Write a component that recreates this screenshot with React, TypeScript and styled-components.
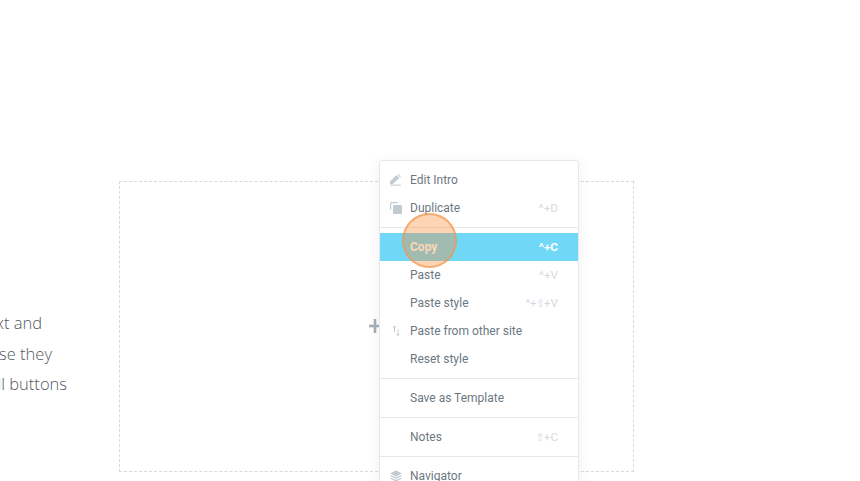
import React from "react";
import styled, { createGlobalStyle } from "styled-components";

const Global = createGlobalStyle`
  html, body { margin: 0; padding: 0; height: 100%; background: #fff; overflow: hidden; }
  #root { height: 100%; }
`;

const Page = styled.div`
  position: relative;
  width: 860px;
  height: 481px;
  overflow: hidden;
  display: flex;
  align-items: flex-start;
  padding-top: 181px;
  box-sizing: border-box;
`;

const Copy = styled.div`
  width: 167px;
  margin-left: -100px;
  margin-right: 52px;
  height: 291px;
  display: flex;
  flex-direction: column;
  justify-content: center;
  font-family: "Open Sans", sans-serif;
  font-weight: 300;
  font-size: 16.5px;
  line-height: 30.5px;
  color: #54595f;
  padding-top: 55px;
  box-sizing: border-box;
`;

const CopyLine = styled.div<{ $inset: number }>`
  text-align: right;
  white-space: nowrap;
  padding-right: ${(p) => p.$inset}px;
`;

const DropZone = styled.div`
  width: 515px;
  height: 291px;
  box-sizing: border-box;
  border: 1px dashed #d5dadf;
  display: flex;
  align-items: center;
  justify-content: center;
  padding: 0 3px 2px 0;
  color: #a4afb7;
`;

const Menu = styled.div`
  position: absolute;
  left: 379px;
  top: 160px;
  width: 200px;
  box-sizing: border-box;
  background: #fff;
  border: 1px solid #e6e9ec;
  border-radius: 3px;
  box-shadow: 0 2px 15px rgba(0, 0, 0, 0.06);
  font-family: Roboto, sans-serif;
  font-size: 12px;
  color: #6d7882;
`;

const Group = styled.div`
  padding: 5px 0;
  & + & { border-top: 1px solid #e6e9ec; }
`;

const Item = styled.div<{ $active?: boolean }>`
  height: 28px;
  display: flex;
  align-items: center;
  padding: 0 20px 0 10px;
  background: ${(p) => (p.$active ? "#71d7f7" : "transparent")};
  color: ${(p) => (p.$active ? "#fff" : "#6d7882")};
  font-weight: ${(p) => (p.$active ? 700 : 400)};
`;

const IconSlot = styled.span`
  width: 12px;
  height: 12px;
  margin-right: 8px;
  color: #c2cbd2;
  display: flex;
  flex: none;
`;

const Label = styled.span`
  flex: 1;
`;

const Shortcut = styled.span<{ $active?: boolean }>`
  font-size: 11.7px;
  color: ${(p) => (p.$active ? "#fff" : "#d5dadf")};
  font-family: Roboto, "DejaVu Sans", sans-serif;
`;

const ShiftKey = styled.span`
  font-size: 11px;
  margin: 0 -1px;
`;

const Spot = styled.div`
  position: absolute;
  left: 402px;
  top: 213px;
  width: 55px;
  height: 55px;
  box-sizing: border-box;
  border-radius: 50%;
  background: rgba(249, 135, 44, 0.35);
  border: 2.5px solid rgba(240, 150, 80, 0.65);
`;

const PlusIcon = () => (
  <svg width="16" height="16" viewBox="0 0 16 16" fill="currentColor">
    <rect x="6.7" y="1" width="2.6" height="14" />
    <rect x="2" y="6.7" width="13" height="2.6" />
  </svg>
);

const Pencil = () => (
  <svg width="12" height="12" viewBox="0 0 12 12" fill="currentColor">
    <path d="M0 7.6 6.4 1.2 9.2 4 2.8 10H0Z" />
    <path d="M7.2.6 8 0 10.8 2.6 10 3.4Z" />
    <rect x="0" y="10.6" width="10.8" height="1" />
  </svg>
);

const Dup = () => (
  <svg width="12" height="12" viewBox="0 0 12 12" fill="currentColor">
    <path d="M0 1a1 1 0 0 1 1-1h6.5v1.2H1.2v6.6H0Z" />
    <rect x="3" y="3" width="9" height="9" rx="1" />
  </svg>
);

const Swap = () => (
  <svg width="12" height="12" viewBox="0 0 12 12" fill="none" stroke="currentColor" strokeWidth="1">
    <path d="M4.5 7V1M3.2 2.4 4.5 1 5.8 2.4" />
    <path d="M8 4.5V10.5M6.7 9.1 8 10.5 9.3 9.1" />
  </svg>
);

const Layers = () => (
  <svg width="12" height="12" viewBox="0 0 12 12" fill="currentColor">
    <path d="M6 0.5 12 3.5 6 6.5 0 3.5Z" />
    <path d="M1.4 5.2 6 7.5 10.6 5.2 12 6 6 9 0 6Z" />
    <path d="M1.4 7.9 6 10.1 10.6 7.9 12 8.6 6 11.6 0 8.6Z" />
  </svg>
);

type Row = { label: string; icon?: React.ReactNode; keys?: React.ReactNode; active?: boolean };

const groups: Row[][] = [
  [
    { label: "Edit Intro", icon: <Pencil /> },
    { label: "Duplicate", icon: <Dup />, keys: "^+D" },
  ],
  [
    { label: "Copy", keys: "^+C", active: true },
    { label: "Paste", keys: "^+V" },
    { label: "Paste style", keys: <>^+<ShiftKey>⇧</ShiftKey>+V</> },
    { label: "Paste from other site", icon: <Swap /> },
    { label: "Reset style" },
  ],
  [{ label: "Save as Template" }],
  [{ label: "Notes", keys: <><ShiftKey>⇧</ShiftKey>+C</> }],
  [{ label: "Navigator", icon: <Layers /> }],
];

export default function App() {
  return (
    <Page>
      <Global />
      <Copy>
        <CopyLine $inset={25}>text and</CopyLine>
        <CopyLine $inset={15}>because they</CopyLine>
        <CopyLine $inset={0}>all buttons</CopyLine>
      </Copy>
      <DropZone>
        <PlusIcon />
      </DropZone>
      <Menu>
        {groups.map((g, i) => (
          <Group key={i}>
            {g.map((r) => (
              <Item key={r.label} $active={r.active}>
                <IconSlot>{r.icon}</IconSlot>
                <Label>{r.label}</Label>
                {r.keys && <Shortcut $active={r.active}>{r.keys}</Shortcut>}
              </Item>
            ))}
          </Group>
        ))}
      </Menu>
      <Spot />
    </Page>
  );
}
